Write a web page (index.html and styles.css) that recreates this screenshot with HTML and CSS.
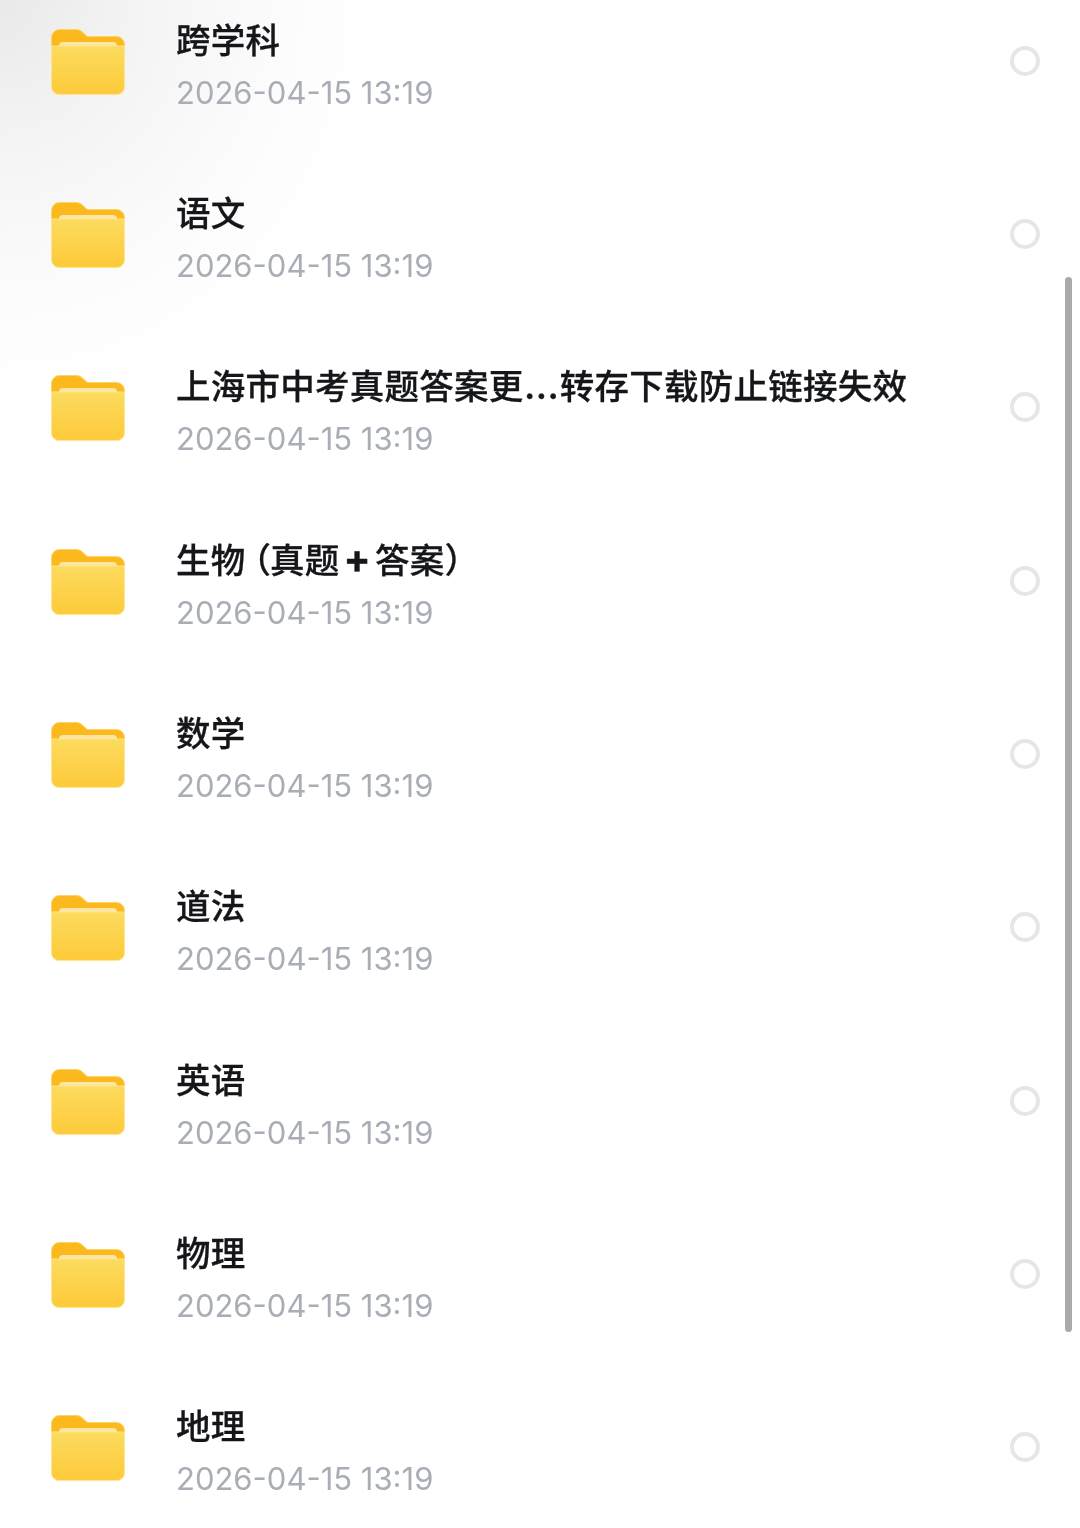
FILE: index.html
```html
<!DOCTYPE html>
<html lang="zh-CN">
<head>
<meta charset="utf-8">
<title>文件列表</title>
<link rel="stylesheet" href="styles.css">
</head>
<body>
<svg class="defs" width="0" height="0" aria-hidden="true">
  <defs>
    <linearGradient id="front" x1="0" y1="0" x2="0" y2="1">
      <stop offset="0" stop-color="#fcdb5e"/>
      <stop offset="1" stop-color="#fdca3a"/>
    </linearGradient>
    <symbol id="folder" viewBox="0 0 74 66">
      <path d="M.5 8.500a8 8 0 0 1 8-8h16.500c3 0 5 1 7 3l2.500 2.500c1 1 2 1.500 4 1.500h27a8 8 0 0 1 8 8V30H.5z" fill="#fbb91e" stroke="#fdd46a"/>
      <path d="M8 17a4 4 0 0 1 4-4h50a4 4 0 0 1 4 4v8H8z" fill="#fde5a4"/>
      <path d="M.5 17h73v41a7.500 7.500 0 0 1-7.500 7.500H8A7.500 7.500 0 0 1 .5 58z" fill="url(#front)" stroke="#fee68c"/>
    </symbol>
  </defs>
</svg>
<main class="screen">
  <div class="list">
    <div class="row"><svg class="folder"><use href="#folder"/></svg><div class="info"><div class="name">跨学科</div><div class="date">2026-04-15 13:19</div></div><span class="radio"></span></div>
    <div class="row"><svg class="folder"><use href="#folder"/></svg><div class="info"><div class="name">语文</div><div class="date">2026-04-15 13:19</div></div><span class="radio"></span></div>
    <div class="row"><svg class="folder"><use href="#folder"/></svg><div class="info"><div class="name">上海市中考真题答案更<span class="dots">...</span>转存下载防止链接失效</div><div class="date">2026-04-15 13:19</div></div><span class="radio"></span></div>
    <div class="row"><svg class="folder"><use href="#folder"/></svg><div class="info"><div class="name">生物<span class="paren-open">（</span>真题<span class="plus">+</span>答案）</div><div class="date">2026-04-15 13:19</div></div><span class="radio"></span></div>
    <div class="row"><svg class="folder"><use href="#folder"/></svg><div class="info"><div class="name">数学</div><div class="date">2026-04-15 13:19</div></div><span class="radio"></span></div>
    <div class="row"><svg class="folder"><use href="#folder"/></svg><div class="info"><div class="name">道法</div><div class="date">2026-04-15 13:19</div></div><span class="radio"></span></div>
    <div class="row"><svg class="folder"><use href="#folder"/></svg><div class="info"><div class="name">英语</div><div class="date">2026-04-15 13:19</div></div><span class="radio"></span></div>
    <div class="row"><svg class="folder"><use href="#folder"/></svg><div class="info"><div class="name">物理</div><div class="date">2026-04-15 13:19</div></div><span class="radio"></span></div>
    <div class="row"><svg class="folder"><use href="#folder"/></svg><div class="info"><div class="name">地理</div><div class="date">2026-04-15 13:19</div></div><span class="radio"></span></div>
  </div>
  <div class="scrollbar"></div>
</main>
</body>
</html>
```
FILE: styles.css
```css
html, body {
  margin: 0;
  padding: 0;
  background: #fff;
}
.defs {
  position: absolute;
}
.screen {
  position: relative;
  width: 1080px;
  height: 1528px;
  overflow: hidden;
  background:
    radial-gradient(ellipse 380px 400px at 0 0, #e9e9ea 0%, #f1f1f2 25%, #f7f7f8 50%, #fcfcfc 75%, #fff 100%);
}
.list {
  display: flex;
  flex-direction: column;
  margin-top: -26px;
  filter: blur(0.4px);
}
.row {
  flex: 0 0 173.33px;
  display: flex;
  align-items: center;
  padding: 0 40px 0 51px;
}
.folder {
  flex: none;
  width: 74px;
  height: 66px;
  margin: 2px 51px 0 0;
}
.info {
  flex: 1;
  min-width: 0;
  display: flex;
  flex-direction: column;
  gap: 13px;
  margin-top: 7px;
}
.name {
  font-family: "Noto Sans CJK SC", "Noto Sans", sans-serif;
  font-size: 34.5px;
  letter-spacing: 0.25px;
  line-height: 44px;
  font-weight: 500;
  color: #14161a;
  white-space: nowrap;
  -webkit-text-stroke: 0.3px #14161a;
}
.dots {
  letter-spacing: 1.5px;
  margin-left: 1px;
}
.paren-open {
  font-feature-settings: "palt" 1;
  margin-left: 7px;
}
.plus {
  font-family: Inter, sans-serif;
  font-size: 40px;
  line-height: 0;
  font-weight: 700;
  margin: 0 4px;
}
.date {
  font-family: Inter, "Liberation Sans", sans-serif;
  font-size: 31px;
  line-height: 40px;
  color: #a9adb5;
  white-space: nowrap;
}
.radio {
  flex: none;
  box-sizing: border-box;
  width: 30px;
  height: 30px;
  border: 4px solid #e6e6e7;
  border-radius: 50%;
}
.scrollbar {
  position: absolute;
  left: 1065px;
  top: 277px;
  width: 7px;
  height: 1055px;
  border-radius: 4px;
  background: #a9a9a9;
}
```
